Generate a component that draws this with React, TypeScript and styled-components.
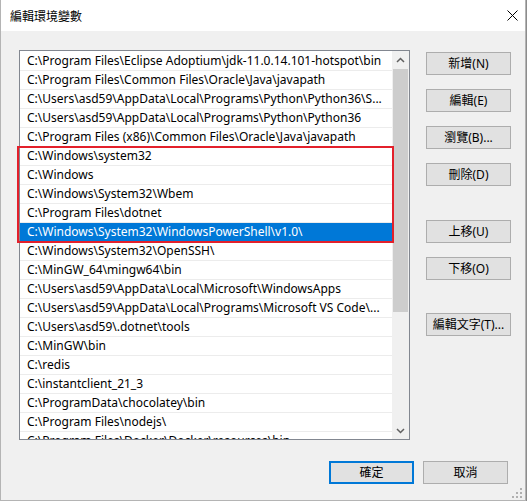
import React from "react";
import styled, { createGlobalStyle } from "styled-components";

const Global = createGlobalStyle`
  html, body { margin: 0; padding: 0; background: #8c8c8c; }
  body { width: 527px; height: 501px; overflow: hidden; }
`;

const Window = styled.div`
  position: relative;
  width: 526px;
  height: 501px;
  box-sizing: border-box;
  border-left: 1px solid #b4b4b4;
  border-right: 1px solid #b4b4b4;
  border-bottom: 1px solid #b4b4b4;
  background: #f0f0f0;
  display: flex;
  flex-direction: column;
  font-family: "Noto Sans", "Noto Sans CJK TC", sans-serif;
  color: #000;
`;

const TitleBar = styled.div`
  height: 31px;
  flex: none;
  background: #fff;
  display: flex;
  align-items: center;
  padding-left: 9px;
`;

const Title = styled.div`
  font-family: "Noto Sans CJK TC", sans-serif;
  font-size: 12px;
  line-height: 16px;
`;

const Close = styled.div`
  margin-left: auto;
  width: 26px;
  height: 31px;
  display: flex;
  align-items: center;
  justify-content: center;
`;

const Body = styled.div`
  flex: 1;
  display: flex;
  flex-direction: column;
  padding: 19px 14px 0 18px;
`;

const Main = styled.div`
  display: flex;
  gap: 16px;
`;

const ListBox = styled.div`
  position: relative;
  width: 391px;
  height: 390px;
  box-sizing: border-box;
  border: 1px solid #828790;
  background: #fff;
  display: flex;
`;

const Rows = styled.div`
  flex: 1;
  overflow: hidden;
`;

const Row = styled.div<{ $selected?: boolean; $first?: boolean }>`
  height: 18px;
  border-top: 1px solid ${(p) => (p.$first ? "#fff" : "#ececec")};
  background: ${(p) => (p.$selected ? "#0078d7" : "#fff")};
  color: ${(p) => (p.$selected ? "#fff" : "#000")};
  padding-left: 7px;
  font-size: 12px;
  line-height: 18px;
  white-space: nowrap;
  overflow: hidden;
`;

const ScrollBar = styled.div`
  width: 17px;
  flex: none;
  background: #f0f0f0;
  display: flex;
  flex-direction: column;
`;

const ScrollArrow = styled.div`
  height: 17px;
  flex: none;
  display: flex;
  align-items: center;
  justify-content: center;
`;

const Track = styled.div`
  flex: 1;
  display: flex;
  flex-direction: column;
`;

const Thumb = styled.div`
  margin: 1px 1px 0 1px;
  height: 243px;
  background: #cdcdcd;
`;

const Highlight = styled.div`
  position: absolute;
  left: -3px;
  top: 95px;
  width: 377px;
  height: 97px;
  box-sizing: border-box;
  border: 2px solid #e3202b;
  pointer-events: none;
`;

const Side = styled.div`
  width: 85px;
  display: flex;
  flex-direction: column;
  padding-top: 2px;
`;

const Button = styled.div<{ $top?: number; $primary?: boolean }>`
  width: 85px;
  height: 23px;
  box-sizing: border-box;
  margin-top: ${(p) => p.$top ?? 0}px;
  background: #e1e1e1;
  border: ${(p) => (p.$primary ? "2px solid #0078d7" : "1px solid #adadad")};
  display: flex;
  align-items: center;
  justify-content: center;
  font-family: "Noto Sans", "Noto Sans CJK TC", sans-serif;
  font-size: 12px;
  line-height: 16px;
  white-space: nowrap;
`;

const Footer = styled.div`
  display: flex;
  justify-content: flex-end;
  gap: 9px;
  margin-top: 21px;
  padding-right: 3px;
`;

const Grip = styled.svg`
  position: absolute;
  right: 3px;
  bottom: 2px;
`;

const paths = [
  "C:\\Program Files\\Eclipse Adoptium\\jdk-11.0.14.101-hotspot\\bin",
  "C:\\Program Files\\Common Files\\Oracle\\Java\\javapath",
  "C:\\Users\\asd59\\AppData\\Local\\Programs\\Python\\Python36\\S...",
  "C:\\Users\\asd59\\AppData\\Local\\Programs\\Python\\Python36",
  "C:\\Program Files (x86)\\Common Files\\Oracle\\Java\\javapath",
  "C:\\Windows\\system32",
  "C:\\Windows",
  "C:\\Windows\\System32\\Wbem",
  "C:\\Program Files\\dotnet",
  "C:\\Windows\\System32\\WindowsPowerShell\\v1.0\\",
  "C:\\Windows\\System32\\OpenSSH\\",
  "C:\\MinGW_64\\mingw64\\bin",
  "C:\\Users\\asd59\\AppData\\Local\\Microsoft\\WindowsApps",
  "C:\\Users\\asd59\\AppData\\Local\\Programs\\Microsoft VS Code\\...",
  "C:\\Users\\asd59\\.dotnet\\tools",
  "C:\\MinGW\\bin",
  "C:\\redis",
  "C:\\instantclient_21_3",
  "C:\\ProgramData\\chocolatey\\bin",
  "C:\\Program Files\\nodejs\\",
  "C:\\Program Files\\Docker\\Docker\\resources\\bin",
];

const sideButtons: { label: string; top: number }[] = [
  { label: "新增(N)", top: 0 },
  { label: "編輯(E)", top: 14 },
  { label: "瀏覽(B)...", top: 14 },
  { label: "刪除(D)", top: 14 },
  { label: "上移(U)", top: 34 },
  { label: "下移(O)", top: 14 },
  { label: "編輯文字(T)...", top: 33 },
];

export default function App() {
  return (
    <>
      <Global />
      <Window>
        <TitleBar>
          <Title>編輯環境變數</Title>
          <Close>
            <svg width="11" height="11" viewBox="0 0 11 11">
              <path d="M0.5 0.5 L10.5 10.5 M10.5 0.5 L0.5 10.5" stroke="#000" strokeWidth="1" fill="none" />
            </svg>
          </Close>
        </TitleBar>
        <Body>
          <Main>
            <ListBox>
              <Rows>
                {paths.map((p, i) => (
                  <Row key={i} $first={i === 0} $selected={i === 9}>
                    {p}
                  </Row>
                ))}
              </Rows>
              <ScrollBar>
                <ScrollArrow>
                  <svg width="9" height="6" viewBox="0 0 9 6">
                    <path d="M1 5 L4.5 1.5 L8 5" stroke="#606060" strokeWidth="1.5" fill="none" />
                  </svg>
                </ScrollArrow>
                <Track>
                  <Thumb />
                </Track>
                <ScrollArrow>
                  <svg width="9" height="6" viewBox="0 0 9 6">
                    <path d="M1 1 L4.5 4.5 L8 1" stroke="#606060" strokeWidth="1.5" fill="none" />
                  </svg>
                </ScrollArrow>
              </ScrollBar>
              <Highlight />
            </ListBox>
            <Side>
              {sideButtons.map((b) => (
                <Button key={b.label} $top={b.top}>
                  {b.label}
                </Button>
              ))}
            </Side>
          </Main>
          <Footer>
            <Button $primary>確定</Button>
            <Button>取消</Button>
          </Footer>
        </Body>
        <Grip width="11" height="11" viewBox="0 0 11 11">
          {[
            [9, 1],
            [9, 5],
            [5, 5],
            [9, 9],
            [5, 9],
            [1, 9],
          ].map(([x, y], i) => (
            <rect key={i} x={x} y={y} width="2" height="2" fill="#b0b0b0" />
          ))}
        </Grip>
      </Window>
    </>
  );
}
